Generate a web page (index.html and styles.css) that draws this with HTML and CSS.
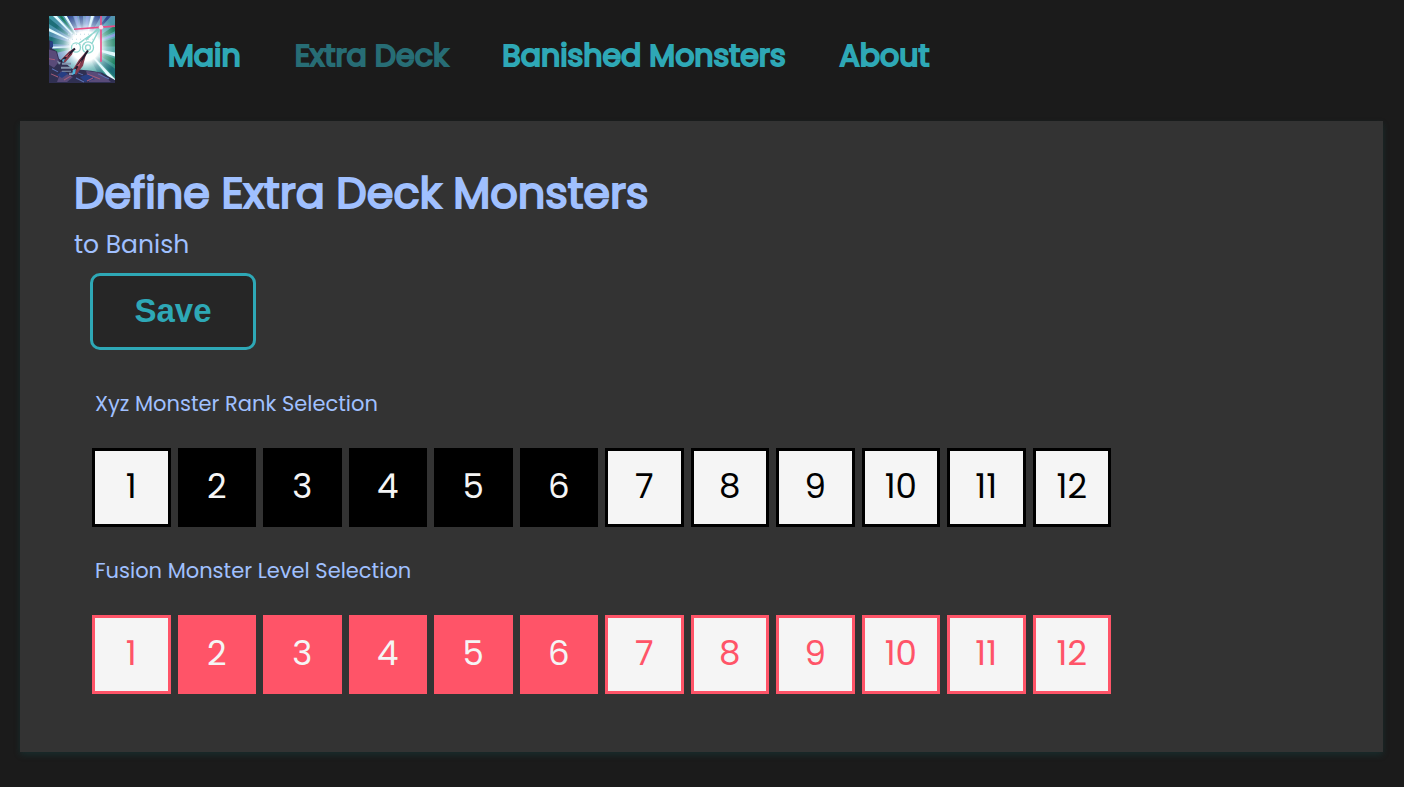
FILE: index.html
```
<!DOCTYPE html>
<html lang="en">
<head>
<meta charset="utf-8">
<meta name="viewport" content="width=device-width, initial-scale=1">
<title>Extra Deck</title>
<link rel="stylesheet" href="styles.css">
</head>
<body>
<header class="site-header">
  <a class="logo" href="#" aria-label="Home">
    <svg viewBox="0 0 66 66" preserveAspectRatio="none" aria-hidden="true">
      <defs>
        <linearGradient id="sky" x1="0" y1="0" x2="1" y2="1">
          <stop offset="0" stop-color="#3b9aa0"/><stop offset=".35" stop-color="#6d86c4"/><stop offset=".6" stop-color="#3f9fa0"/><stop offset="1" stop-color="#2c8a78"/>
        </linearGradient>
        <radialGradient id="glow" cx=".55" cy=".45" r=".52">
          <stop offset="0" stop-color="#fff"/><stop offset=".42" stop-color="#fff"/><stop offset=".65" stop-color="#dff5fa" stop-opacity=".5"/><stop offset="1" stop-color="#bfe8f0" stop-opacity="0"/>
        </radialGradient>
      </defs>
      <rect width="66" height="66" fill="url(#sky)"/>
      <g>
        <path fill="#1d6e78" d="M35 30 0 2V8ZM35 30 0 20V27ZM35 30 62 66H54ZM35 30 66 60V52Z"/>
        <path fill="#e4fbff" d="M35 30 4 0H8ZM35 30 0 12V15ZM35 30 15 0H18ZM35 30 0 30V32ZM35 30 66 62V66H64ZM35 30 66 36V40ZM35 30 42 0H45Z"/>
        <path fill="#2f468f" d="M35 30 18 0H24ZM35 30 30 0H34ZM35 30 46 0H52ZM35 30 58 0H62Z"/>
        <path fill="#187d5b" d="M35 30 66 9V15ZM35 30 66 22V30ZM35 30 66 42V48ZM35 30 0 33V38ZM35 30 10 0H13Z"/>
        <path fill="#7c8cda" d="M35 30 25 0H28ZM35 30 37 0H40ZM35 30 66 17V20Z"/>
      </g>
      <rect width="66" height="66" fill="url(#glow)"/>
      <g fill="none" stroke="#8ed7cf" stroke-width="1.3">
        <circle cx="27" cy="31" r="4.5"/><circle cx="39" cy="31" r="5.5"/><circle cx="39" cy="31" r="2.5"/>
        <path d="M30 27 51 12 43 27M37 24 53 8"/>
      </g>
      <path d="M19 23h25M19 18h25M19 28h25" stroke="#c4dce5" stroke-dasharray="1 3"/>
      <path d="M25 13 66 10M52 0V45" stroke="#e94b86" stroke-width="1.6" fill="none"/>
      <circle cx="52" cy="11" r="2.2" fill="#ffd9e8"/>
      <path fill="#303052" d="M0 24 3 25V32L8 35 10 42 16 46 23 52 32 53 42 54 53 56 66 63V66H0Z"/>
      <path fill="#594b79" d="M0 33 7 35 10 45 5 51 0 48ZM37 54 51 56 62 65H40ZM12 54 24 60 18 65H8Z"/>
      <path fill="#273e83" d="M1 25h3v6H1ZM8 58l6-4 5 3-6 4ZM31 60l8-3 7 5-10 3Z"/>
      <path fill="#853b4d" d="M25 32 20 35 12 43 16 46 23 38ZM38 34 30 43 23 54 27 58 34 49Z"/>
      <path stroke="#241c30" stroke-width="2" d="M26 32 12 45M39 34 24 56"/>
      <path fill="#c05b68" d="M21 36 16 40 18 41ZM33 43 28 49 30 50Z"/>
      <path fill="#8291aa" d="M13 46h9v2h-9ZM12 50h10v2H12ZM13 54h9v1h-9ZM8 44l4 2-2 2ZM20 56h4v2h-4Z"/>
      <path fill="#4bb5dc" d="M24 53l3-1-1 5-3 1ZM13 43l3-1-2 4Z"/>
      <path stroke="#a35c7a" d="M2 57 9 60M38 57 51 62M15 63 22 59M44 61 38 64M0 42l6 1" fill="none"/>
      <path stroke="#5b72b5" d="M27 61 35 65M49 57 60 62M3 52 9 55M29 56 34 58" fill="none"/>
    </svg>
  </a>
  <nav class="nav" aria-label="Primary">
    <a class="nav-link" href="#">Main</a>
    <a class="nav-link nav-link-current" href="#" aria-current="page">Extra Deck</a>
    <a class="nav-link" href="#">Banished Monsters</a>
    <a class="nav-link" href="#">About</a>
  </nav>
</header>
<main class="panel">
  <h1 class="title">Define Extra Deck Monsters</h1>
  <p class="subtitle">to Banish</p>
  <button class="save" type="button">Save</button>
  <section class="group" aria-labelledby="xyz">
    <h2 class="group-title" id="xyz">Xyz Monster Rank Selection</h2>
    <div class="levels">
      <button class="level" type="button" aria-pressed="false">1</button>
      <button class="level" type="button" aria-pressed="true">2</button>
      <button class="level" type="button" aria-pressed="true">3</button>
      <button class="level" type="button" aria-pressed="true">4</button>
      <button class="level" type="button" aria-pressed="true">5</button>
      <button class="level" type="button" aria-pressed="true">6</button>
      <button class="level" type="button" aria-pressed="false">7</button>
      <button class="level" type="button" aria-pressed="false">8</button>
      <button class="level" type="button" aria-pressed="false">9</button>
      <button class="level" type="button" aria-pressed="false">10</button>
      <button class="level" type="button" aria-pressed="false">11</button>
      <button class="level" type="button" aria-pressed="false">12</button>
    </div>
  </section>
  <section class="group group-fusion" aria-labelledby="fusion">
    <h2 class="group-title" id="fusion">Fusion Monster Level Selection</h2>
    <div class="levels">
      <button class="level" type="button" aria-pressed="false">1</button>
      <button class="level" type="button" aria-pressed="true">2</button>
      <button class="level" type="button" aria-pressed="true">3</button>
      <button class="level" type="button" aria-pressed="true">4</button>
      <button class="level" type="button" aria-pressed="true">5</button>
      <button class="level" type="button" aria-pressed="true">6</button>
      <button class="level" type="button" aria-pressed="false">7</button>
      <button class="level" type="button" aria-pressed="false">8</button>
      <button class="level" type="button" aria-pressed="false">9</button>
      <button class="level" type="button" aria-pressed="false">10</button>
      <button class="level" type="button" aria-pressed="false">11</button>
      <button class="level" type="button" aria-pressed="false">12</button>
    </div>
  </section>
</main>
</body>
</html>
```
FILE: styles.css
```
* {
  box-sizing: border-box;
}

body {
  margin: 0;
  padding: 16px 21px 34px 20px;
  background: #1b1b1b;
  color: #a0c0ff;
  font-family: Poppins, Inter, sans-serif;
}

.site-header {
  display: flex;
  align-items: center;
  gap: 53px;
  padding: 0 29px;
  margin-bottom: 38px;
}

.logo {
  flex: none;
  width: 66px;
  height: 67px;
}

.logo svg {
  display: block;
  width: 100%;
  height: 100%;
}

.nav {
  display: flex;
  flex-wrap: wrap;
  gap: 54px;
  padding-top: 12px;
}

.nav-link {
  color: #2ea8b6;
  font-size: 30px;
  font-weight: 400;
  line-height: 44px;
  text-decoration: none;
  -webkit-text-stroke: 2px currentColor;
}

.nav-link-current {
  color: #276d75;
}

.panel {
  padding: 40px 54px 58px;
  background: #333;
  box-shadow: 0 3px 6px rgba(20, 84, 84, 0.3);
}

.title {
  margin: 0;
  font-size: 43px;
  font-weight: 400;
  line-height: 64px;
  -webkit-text-stroke: 2px currentColor;
}

.subtitle {
  margin: 0 0 8px;
  font-size: 25px;
  line-height: 40px;
}

.save {
  display: block;
  min-width: 166px;
  height: 77px;
  margin-left: 16px;
  padding-bottom: 3px;
  border: 3px solid #2ea8b6;
  border-radius: 10px;
  background: #262626;
  color: #2ea8b6;
  font: bold 33px/1 "Liberation Sans", Arial, sans-serif;
}

.group {
  margin-left: 18px;
  padding-top: 36px;
}

.group + .group {
  padding-top: 26px;
}

.group-title {
  margin: 0 3px 27px;
  font-size: 21px;
  font-weight: 400;
  line-height: 35px;
}

.levels {
  display: grid;
  grid-template-columns: repeat(12, 1fr);
  gap: 7px;
  max-width: 1019px;
}

.level {
  height: 79px;
  padding: 0 0 3px;
  border: 3px solid #000;
  border-radius: 0;
  background: #f5f5f5;
  color: #000;
  font: 400 34px/1 Poppins, Inter, sans-serif;
}

.level[aria-pressed="true"] {
  background: #000;
  color: #f5f5f5;
}

.group-fusion .level {
  border-color: #ff5468;
  color: #ff5468;
}

.group-fusion .level[aria-pressed="true"] {
  background: #ff5468;
  color: #f5f5f5;
}
```
